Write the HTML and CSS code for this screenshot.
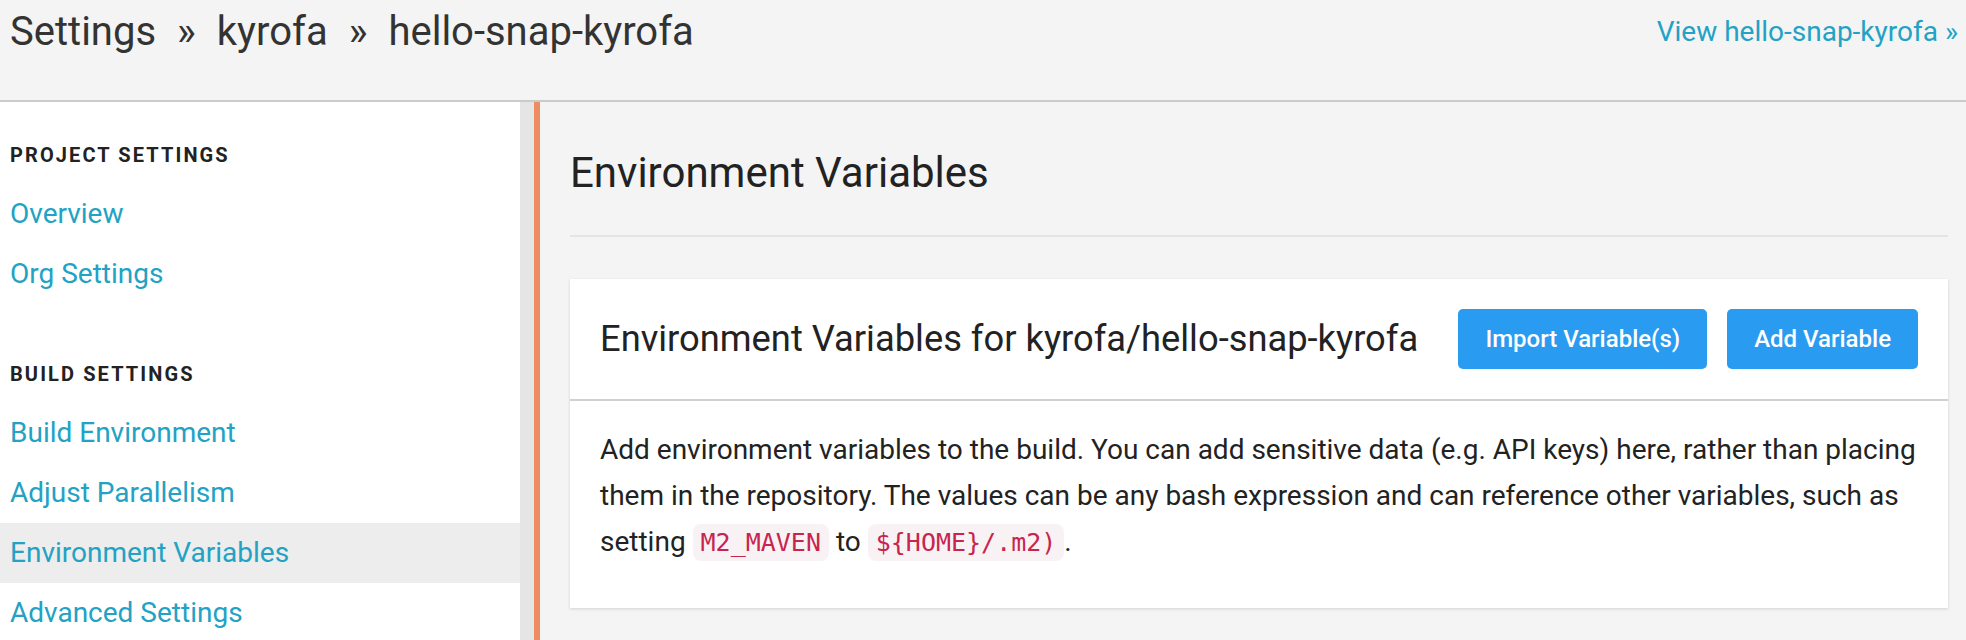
FILE: index.html
```html
<!DOCTYPE html>
<html lang="en">
<head>
<meta charset="utf-8">
<title>Settings » kyrofa » hello-snap-kyrofa</title>
<link rel="stylesheet" href="styles.css">
</head>
<body>
<header class="topbar">
  <h1 class="crumbs"><span>Settings</span><span class="sep">»</span><span>kyrofa</span><span class="sep">»</span><span>hello-snap-kyrofa</span></h1>
  <a class="view-link" href="#">View hello-snap-kyrofa »</a>
</header>
<div class="layout">
  <nav class="sidebar">
    <div class="nav-section">
      <h4 class="nav-heading">PROJECT SETTINGS</h4>
      <ul class="nav-list">
        <li><a href="#">Overview</a></li>
        <li><a href="#">Org Settings</a></li>
      </ul>
    </div>
    <div class="nav-section">
      <h4 class="nav-heading">BUILD SETTINGS</h4>
      <ul class="nav-list">
        <li><a href="#">Build Environment</a></li>
        <li><a href="#">Adjust Parallelism</a></li>
        <li class="active"><a href="#">Environment Variables</a></li>
        <li><a href="#">Advanced Settings</a></li>
      </ul>
    </div>
  </nav>
  <div class="gutter"></div>
  <main class="content">
    <h2 class="page-title">Environment Variables</h2>
    <hr class="divider">
    <section class="card">
      <div class="card-header">
        <h3 class="card-title">Environment Variables for kyrofa/hello-snap-kyrofa</h3>
        <div class="actions">
          <button class="btn">Import Variable(s)</button>
          <button class="btn">Add Variable</button>
        </div>
      </div>
      <div class="card-body">
        <p>Add environment variables to the build. You can add sensitive data (e.g. API keys) here, rather than placing them in the repository. The values can be any bash expression and can reference other variables, such as setting <code>M2_MAVEN</code> to <code>${HOME}/.m2)</code>.</p>
      </div>
    </section>
  </main>
</div>
</body>
</html>
```

FILE: styles.css
```css
html, body {
  margin: 0;
  height: 100%;
}

body {
  font-family: Roboto, "Liberation Sans", sans-serif;
  color: #222;
  background: #f4f4f4;
  display: flex;
  flex-direction: column;
  overflow: hidden;
}

.topbar {
  box-sizing: border-box;
  height: 102px;
  flex-shrink: 0;
  display: flex;
  justify-content: space-between;
  align-items: flex-start;
  padding: 10px 8px 0 10px;
  background: #f4f4f4;
  border-bottom: 2px solid #cbcbcb;
}

.crumbs {
  margin: 0;
  font-size: 40px;
  line-height: 44px;
  font-weight: 400;
  color: #333;
}

.sep {
  margin: 0 21px;
}

.view-link {
  font-size: 28px;
  line-height: 44px;
  color: #22a2c4;
  text-decoration: none;
}

.layout {
  flex: 1;
  display: flex;
  min-height: 0;
}

.sidebar {
  width: 520px;
  flex-shrink: 0;
  background: #fff;
  padding-top: 41px;
}

.nav-section + .nav-section {
  margin-top: 58px;
}

.nav-heading {
  margin: 0 0 17px;
  padding-left: 10px;
  font-size: 20px;
  line-height: 24px;
  font-weight: 700;
  letter-spacing: 2.1px;
  color: #222;
}

.nav-list {
  list-style: none;
  margin: 0;
  padding: 0;
}

.nav-list a {
  display: block;
  height: 60px;
  line-height: 60px;
  padding-left: 10px;
  font-size: 28px;
  color: #22a2c4;
  text-decoration: none;
}

.nav-list .active a {
  background: #ededed;
}

.gutter {
  width: 14px;
  flex-shrink: 0;
  background: #e5e5e5;
}

.content {
  flex: 1;
  border-left: 6px solid #ee8c63;
  padding: 46px 18px 0 30px;
}

.page-title {
  margin: 0;
  font-size: 42px;
  line-height: 50px;
  font-weight: 400;
  color: #222;
}

.divider {
  margin: 37px 0 0;
  border: 0;
  height: 2px;
  background: #e4e4e4;
}

.card {
  margin-top: 42px;
  background: #fff;
  box-shadow: 0 1px 3px rgba(0, 0, 0, 0.14);
}

.card-header {
  display: flex;
  align-items: center;
  justify-content: space-between;
  padding: 30px;
  border-bottom: 2px solid #d0d0d0;
}

.card-title {
  margin: 0;
  font-size: 36.3px;
  line-height: 44px;
  font-weight: 400;
  color: #222;
}

.actions {
  display: flex;
  gap: 20px;
}

.btn {
  height: 60px;
  padding: 0 27px;
  border: 0;
  border-radius: 5px;
  background: #299bf0;
  color: #fff;
  font-family: inherit;
  font-size: 24px;
  font-weight: 500;
}

.card-body {
  padding: 26px 30px 22px;
}

.card-body p {
  margin: 0 0 20px;
  font-size: 28px;
  line-height: 46px;
}

code {
  font-family: "DejaVu Sans Mono", "Liberation Mono", monospace;
  font-size: 25px;
  color: #c7254e;
  background: #f9f2f4;
  padding: 4px 8px;
  border-radius: 8px;
}
```
